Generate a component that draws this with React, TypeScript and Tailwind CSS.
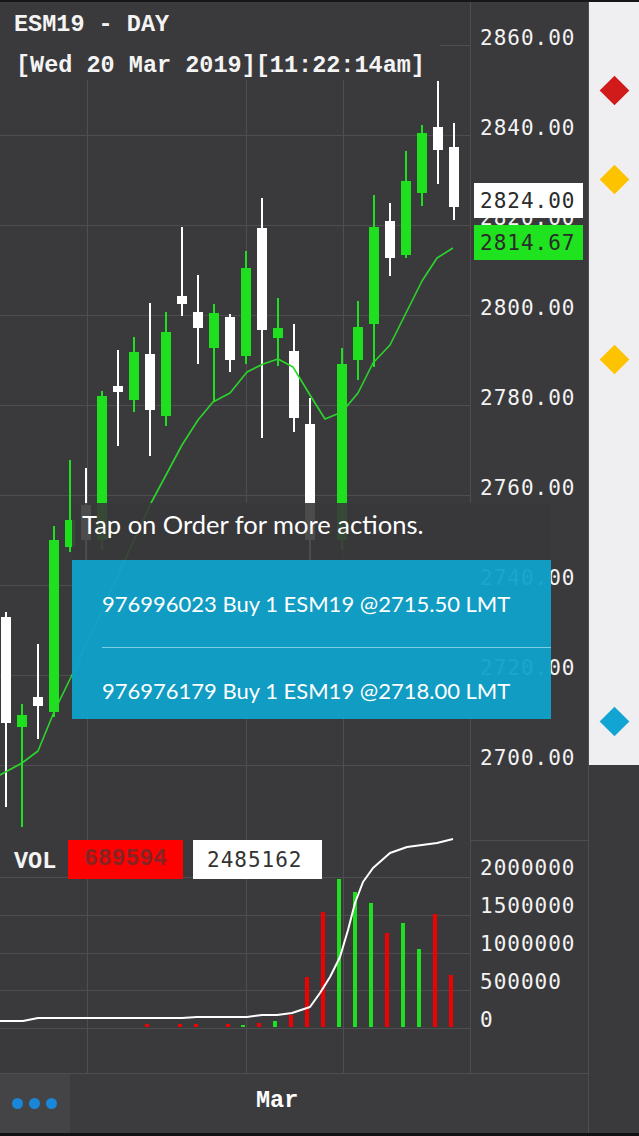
import React from "react";

type Candle = [up: boolean, wickTop: number, bodyTop: number, bodyBottom: number, wickBottom: number] | null;

// daily candles, x = 6 + 16 * i (page coordinates)
const candles: Candle[] = [
  [false, 612, 617, 723, 807],
  [true, 704, 715, 727, 827],
  [false, 644, 697, 706, 739],
  [true, 526, 540, 712, 717],
  [true, 460, 520, 547, 552],
  [false, 468, 505, 540, 560],
  [true, 391, 396, 540, 550],
  [false, 350, 386, 392, 446],
  [true, 337, 352, 400, 412],
  [false, 303, 354, 410, 456],
  [true, 312, 332, 416, 426],
  [false, 227, 296, 304, 316],
  [false, 275, 312, 328, 364],
  [true, 304, 313, 348, 401],
  [false, 314, 317, 360, 372],
  [true, 251, 268, 356, 364],
  [false, 198, 228, 330, 438],
  [true, 298, 328, 338, 366],
  [false, 324, 351, 418, 432],
  [false, 398, 424, 540, 560],
  null,
  [true, 348, 364, 540, 550],
  [true, 301, 327, 360, 380],
  [true, 195, 227, 324, 367],
  [false, 203, 221, 258, 276],
  [true, 151, 181, 255, 258],
  [true, 125, 133, 193, 206],
  [false, 81, 127, 150, 184],
  [false, 123, 147, 207, 220],
];

const ma = [
  [0, 775], [22, 763], [38, 751], [54, 712], [72, 675], [86, 645], [102, 610], [118, 575],
  [134, 540], [151, 503], [166, 475], [182, 445], [198, 420], [213, 402], [230, 393],
  [247, 372], [263, 364], [278, 359], [293, 367], [310, 395], [325, 419], [342, 412],
  [358, 393], [373, 363], [390, 345], [406, 313], [422, 281], [437, 258], [453, 248],
];

const volumes: [number, number, boolean][] = [
  [147, 1024, false], [180, 1024, false], [196, 1024, false], [228, 1024, false],
  [243, 1025, true], [259, 1023, false], [275, 1021, true], [291, 1015, false],
  [307, 977, false], [323, 912, false], [339, 879, true], [355, 892, true],
  [371, 903, true], [387, 933, false], [403, 923, true], [419, 949, true],
  [435, 914, false], [451, 975, false],
];

const cumulative = [
  [0, 1021], [23, 1021], [38, 1018], [182, 1018], [197, 1017], [247, 1017], [262, 1015],
  [277, 1015], [292, 1013], [310, 1007], [320, 993], [330, 977], [340, 957], [348, 930],
  [355, 903], [363, 882], [373, 868], [390, 853], [407, 847], [437, 843], [453, 839],
];

const priceLabels = ["2860.00", "2840.00", "2820.00", "2800.00", "2780.00", "2760.00", "2740.00", "2720.00", "2700.00"];
const volLabels = ["2000000", "1500000", "1000000", "500000", "0"];

const GREEN = "#1fe01f";
const GRID = "#4e4e50";

function Chart() {
  const hLines = [45, 135, 225, 315, 405, 495, 585, 675, 765, 877, 915, 953, 990, 1028];
  const vLines = [87, 246, 343];
  return (
    <svg width={470} height={1071} viewBox="0 2 470 1071" className="block shrink-0">
      {hLines.map((y) => (
        <line key={y} x1={0} x2={470} y1={y + 0.5} y2={y + 0.5} stroke={GRID} strokeWidth={1} />
      ))}
      {vLines.map((x) => (
        <line key={x} x1={x + 0.5} x2={x + 0.5} y1={2} y2={1073} stroke={GRID} strokeWidth={1} />
      ))}
      {candles.map((c, i) => {
        if (!c) return null;
        const [up, wt, bt, bb, wb] = c;
        const x = 6 + 16 * i;
        const col = up ? GREEN : "#ffffff";
        return (
          <g key={i} shapeRendering="crispEdges">
            <rect x={x - 1} y={wt} width={2} height={wb - wt} fill={col} />
            <rect x={x - 5} y={bt} width={10} height={bb - bt} fill={col} />
          </g>
        );
      })}
      <polyline
        points={ma.map((p) => p.join(",")).join(" ")}
        fill="none"
        stroke="#2bd62b"
        strokeWidth={1.6}
        strokeLinejoin="round"
      />
      {volumes.map(([x, top, up]) => (
        <rect
          key={x}
          x={x - 2}
          y={top}
          width={4}
          height={1027 - top}
          fill={up ? GREEN : "#f00000"}
          shapeRendering="crispEdges"
        />
      ))}
      <polyline
        points={cumulative.map((p) => p.join(",")).join(" ")}
        fill="none"
        stroke="#ffffff"
        strokeWidth={2}
        strokeLinejoin="round"
      />
    </svg>
  );
}

function Diamond({ color, className }: { color: string; className: string }) {
  return (
    <div className={`w-[30px] h-[30px] flex items-center justify-center ${className}`}>
      <div className={`w-[21px] h-[21px] rotate-45 ${color}`} />
    </div>
  );
}

export default function App() {
  const axisFont = "font-['DejaVu_Sans_Mono',monospace] text-[21px] tracking-[1px] leading-[20px]";
  const courier = "font-['Liberation_Mono',monospace] font-bold";
  const lato = "font-['Lato','Open_Sans',sans-serif]";

  return (
    <div className="w-[639px] h-[1136px] bg-[#3a3a3c] flex flex-col overflow-hidden">
      <div className="h-[2px] bg-[#161617]" />
      <div className="flex flex-1">
        {/* chart + axis + bottom bar */}
        <div className="relative w-[588px] flex flex-col">
          <div className="flex h-[1071px]">
            <Chart />
            <div className={`w-[118px] border-l border-[#4e4e50] flex flex-col text-[#f2f2f2] ${axisFont}`}>
              <div className="pt-[26px] pl-[9px] h-[838px] flex flex-col">
                {priceLabels.map((l) => (
                  <div key={l} className="h-[90px] shrink-0">{l}</div>
                ))}
              </div>
              <div className="border-t border-[#4e4e50] pt-[17px] pl-[9px] flex flex-col">
                {volLabels.map((l) => (
                  <div key={l} className="h-[38px] shrink-0">{l}</div>
                ))}
              </div>
            </div>
          </div>
          <div className="h-[60px] border-t border-[#4e4e50] flex items-center bg-[#3c3c3e]">
            <div className="w-[70px] h-full bg-[#444446] flex items-center gap-[6px] pl-[12px]">
              <div className="w-[11px] h-[11px] rounded-full bg-[#1a86d8]" />
              <div className="w-[11px] h-[11px] rounded-full bg-[#1a86d8]" />
              <div className="w-[11px] h-[11px] rounded-full bg-[#1a86d8]" />
            </div>
            <div className={`ml-[186px] mb-[6px] text-white text-[23.5px] leading-[28px] ${courier}`}>Mar</div>
          </div>

          {/* header */}
          <div className={`absolute left-0 top-0 w-[440px] h-[78px] bg-[#3a3a3c] pl-[14px] pt-[9px] text-[#f4f4f4] text-[23.5px] leading-[28px] ${courier}`}>
            <div>ESM19 - DAY</div>
            <div className="mt-[13px] pl-[2px]">[Wed 20 Mar 2019][11:22:14am]</div>
          </div>

          {/* price badges */}
          <div className={`absolute left-[474px] top-[181px] w-[109px] h-[35px] bg-white text-[#2b2b2b] pl-[6px] flex items-center ${axisFont}`}>
            2824.00
          </div>
          <div className={`absolute left-[474px] top-[223px] w-[109px] h-[35px] bg-[#1fe31f] text-[#2b2b2b] pl-[6px] flex items-center ${axisFont}`}>
            2814.67
          </div>

          {/* order hint + list */}
          <div className={`absolute left-[72px] top-[501px] w-[479px] h-[57px] bg-[#38383a]/90 pl-[10px] pt-[6px] text-white text-[25.5px] leading-[30px] ${lato}`}>
            Tap on Order for more actions.
          </div>
          <div className={`absolute left-[72px] top-[558px] w-[479px] h-[159px] bg-[#0fa1ca]/95 pl-[30px] text-white text-[22px] ${lato}`}>
            <div className="h-[87px] flex items-center leading-[28px]">976996023 Buy 1 ESM19 @2715.50 LMT</div>
            <div className="border-t border-[#7dcde4] pt-[29px] leading-[28px]">976976179 Buy 1 ESM19 @2718.00 LMT</div>
          </div>

          {/* volume header */}
          <div className="absolute left-0 top-[838px] flex items-center pl-[14px]">
            <div className={`w-[54px] text-[#f4f4f4] text-[23.5px] leading-[28px] pt-[4px] ${courier}`}>VOL</div>
            <div className={`w-[115px] h-[39px] bg-[#ff0000] text-[#862424] pl-[16px] flex items-center text-[23px] ${courier}`}>
              689594
            </div>
            <div className={`ml-[10px] w-[129px] h-[39px] bg-white text-[#333] pl-[14px] flex items-center ${axisFont}`}>
              2485162
            </div>
          </div>
        </div>

        {/* order markers strip */}
        <div className="w-[51px] border-l border-[#4e4e50] flex flex-col">
          <div className="h-[763px] bg-[#efeff1] flex flex-col items-center">
            <Diamond color="bg-[#d11a1a]" className="mt-[73px]" />
            <Diamond color="bg-[#fdc300]" className="mt-[59px]" />
            <Diamond color="bg-[#fdc300]" className="mt-[150px]" />
            <Diamond color="bg-[#12a4d2]" className="mt-[332px]" />
          </div>
        </div>
      </div>
      <div className="h-[3px] bg-[#111112]" />
    </div>
  );
}
